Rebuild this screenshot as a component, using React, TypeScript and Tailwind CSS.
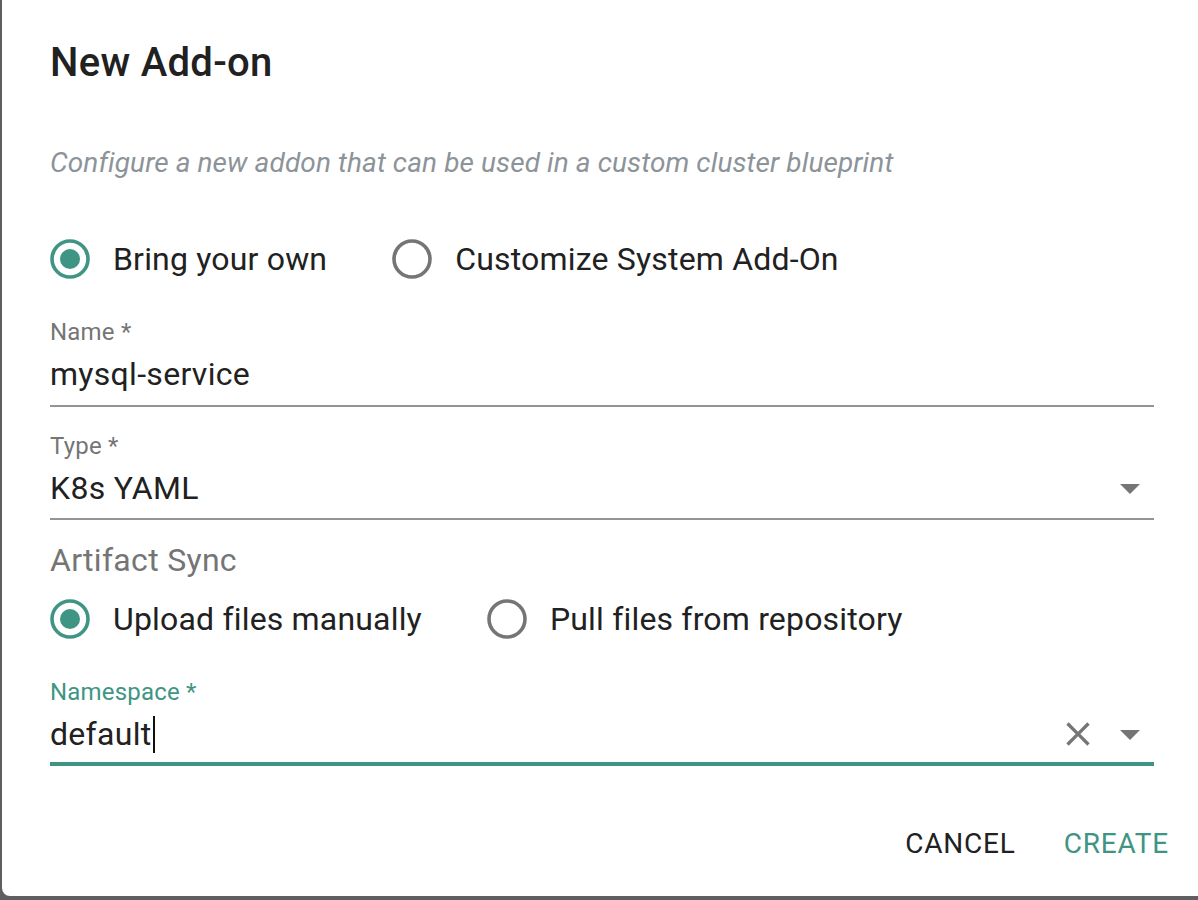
import React from "react";

const TEAL = "#3f9584";

const Radio = ({ checked }: { checked: boolean }) => (
  <svg width="40" height="40" viewBox="0 0 40 40" className="shrink-0">
    <circle
      cx="20"
      cy="20"
      r="18"
      fill="none"
      stroke={checked ? TEAL : "#757575"}
      strokeWidth="3.6"
    />
    {checked && <circle cx="20" cy="20" r="10" fill={TEAL} />}
  </svg>
);

const RadioOption = ({ label, checked }: { label: string; checked?: boolean }) => (
  <div className="flex h-[48px] items-center">
    <Radio checked={!!checked} />
    <span className="ml-[23px] text-[32px] leading-[48px] tracking-[0.18px] text-[#212121]">
      {label}
    </span>
  </div>
);

const ArrowDown = () => (
  <svg width="48" height="48" viewBox="0 0 24 24" className="shrink-0">
    <path d="M7 10l5 5 5-5z" fill="#757575" />
  </svg>
);

const ClearIcon = () => (
  <svg width="40" height="40" viewBox="0 0 24 24" className="shrink-0">
    <path
      d="M19 6.41L17.59 5 12 10.59 6.41 5 5 6.41 10.59 12 5 17.59 6.41 19 12 13.41 17.59 19 19 17.59 13.41 12z"
      fill="#757575"
    />
  </svg>
);

export default function App() {
  return (
    <div
      className="h-[900px] w-full bg-[#5f5f5f] pb-[4px] pl-[2px]"
      style={{ fontFamily: "Roboto, 'Liberation Sans', sans-serif" }}
    >
      <div className="flex h-full flex-col rounded-bl-[8px] bg-white pl-[48px] pr-[44px]">
        <h2 className="mt-[39px] text-[40px] font-medium leading-[48px] tracking-[0.3px] text-[#212121]">
          New Add-on
        </h2>

        <p className="mt-[58px] text-[28px] italic leading-[36px] tracking-[0.1px] text-[#8c9399]">
          Configure a new addon that can be used in a custom cluster blueprint
        </p>

        <div className="mt-[54px] flex gap-[65px]">
          <RadioOption label="Bring your own" checked />
          <RadioOption label="Customize System Add-On" />
        </div>

        {/* name */}
        <div className="mt-[37px]">
          <div className="text-[24px] leading-[24px] tracking-[0.2px] text-[#757575]">Name *</div>
          <div className="mt-[6px] flex h-[48px] items-center text-[32px] tracking-[0.3px] text-[#212121]">
            mysql-service
          </div>
          <div className="mt-[7px] h-[2px] bg-[#949494]" />
        </div>

        {/* type */}
        <div className="mt-[27px]">
          <div className="text-[24px] leading-[24px] tracking-[0.2px] text-[#757575]">Type *</div>
          <div className="mt-[6px] flex h-[48px] items-center justify-between text-[32px] tracking-[0.3px] text-[#212121]">
            <span>K8s YAML</span>
            <ArrowDown />
          </div>
          <div className="mt-[6px] h-[2px] bg-[#949494]" />
        </div>

        <div className="mt-[16px] text-[32px] leading-[48px] tracking-[0.3px] text-[#757575]">
          Artifact Sync
        </div>

        <div className="mt-[11px] flex gap-[65px]">
          <RadioOption label="Upload files manually" checked />
          <RadioOption label="Pull files from repository" />
        </div>

        {/* namespace */}
        <div className="mt-[37px]">
          <div className="text-[24px] leading-[24px] tracking-[0.2px] text-[#3f9584]">
            Namespace *
          </div>
          <div className="mt-[6px] flex h-[48px] items-center text-[32px] tracking-[0.3px] text-[#212121]">
            <span className="flex items-center">
              default
              <span className="ml-[1px] inline-block h-[37px] w-[2px] bg-[#111]" />
            </span>
            <span className="ml-auto flex items-center gap-[8px]">
              <ClearIcon />
              <ArrowDown />
            </span>
          </div>
          <div className="mt-[4px] h-[4px] bg-[#3f9584]" />
        </div>

        <div className="-mr-[31px] mt-[42px] flex h-[72px] items-center justify-end gap-[16px]">
          <button className="px-[16px] text-[28px] uppercase tracking-[0.8px] text-[#212121]">
            Cancel
          </button>
          <button className="px-[16px] text-[28px] uppercase tracking-[0.8px] text-[#3f9584]">
            Create
          </button>
        </div>
      </div>
    </div>
  );
}
